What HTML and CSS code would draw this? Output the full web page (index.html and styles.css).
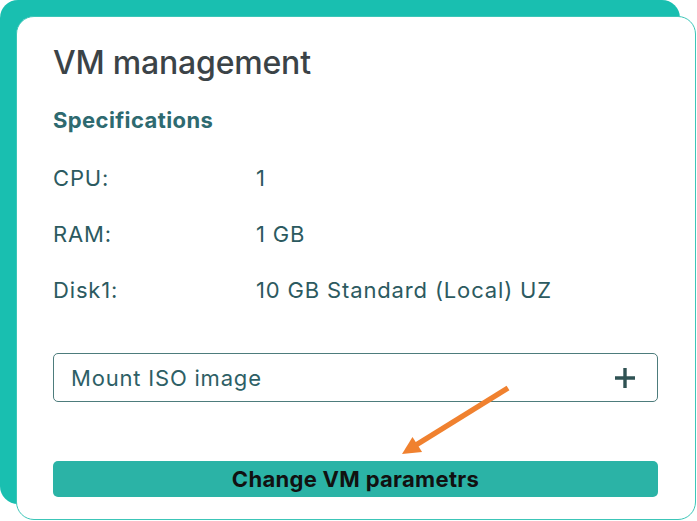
FILE: index.html
```html
<!DOCTYPE html>
<html lang="en">
<head>
<meta charset="utf-8">
<title>VM management</title>
<link rel="stylesheet" href="styles.css">
</head>
<body>
<section class="card">
  <h1 class="title">VM management</h1>
  <h2 class="subtitle">Specifications</h2>
  <dl class="specs">
    <div class="row"><dt>CPU:</dt><dd>1</dd></div>
    <div class="row"><dt>RAM:</dt><dd>1 GB</dd></div>
    <div class="row"><dt>Disk1:</dt><dd>10 GB Standard (Local) UZ</dd></div>
  </dl>
  <button class="mount" type="button">
    <span>Mount ISO image</span>
    <svg class="plus" width="24" height="24" viewBox="0 0 24 24" aria-hidden="true">
      <path d="M12 2v20M2 12h20" stroke="#2f5253" stroke-width="3.4" fill="none"/>
    </svg>
  </button>
  <button class="change" type="button">Change VM parametrs</button>
  <svg class="arrow" width="125" height="82" viewBox="0 0 125 82" aria-hidden="true">
    <line x1="113" y1="8" x2="21" y2="65" stroke="#f0812f" stroke-width="5.5" stroke-linecap="butt"/>
    <polygon points="7,74 17.5,56.9 27.1,72.1" fill="#f0812f"/>
  </svg>
</section>
</body>
</html>
```
FILE: styles.css
```css
html, body {
  margin: 0;
  padding: 0;
  background: #ffffff;
}
body {
  width: 697px;
  height: 521px;
  overflow: hidden;
  font-family: "Inter", "Liberation Sans", sans-serif;
}
.card {
  position: relative;
  box-sizing: border-box;
  margin: 16px 0 0 16px;
  width: 680px;
  height: 504px;
  background: #ffffff;
  border: 1.5px solid #3cc6b8;
  border-radius: 18px;
  box-shadow: -16px -16px 0 0 #19bfb0;
  padding: 27px 37px 0 36px;
  display: flex;
  flex-direction: column;
}
.title {
  margin: 0;
  font-size: 32px;
  line-height: 38px;
  font-weight: 500;
  color: #3b4347;
  letter-spacing: -0.2px;
}
.subtitle {
  margin: 24px 0 0;
  font-size: 22px;
  line-height: 28px;
  font-weight: 700;
  letter-spacing: 0.4px;
  color: #2e6a70;
}
.specs {
  margin: 16px 0 0;
}
.row {
  display: flex;
  height: 56px;
  align-items: center;
  font-size: 22px;
  letter-spacing: 0.85px;
  color: #2c5a60;
}
.row dt {
  width: 203px;
  flex: none;
}
.row dd {
  margin: 0;
}
.mount {
  margin-top: 35px;
  height: 49px;
  box-sizing: border-box;
  border: 1.5px solid #4d7c7c;
  border-radius: 5px;
  background: #fff;
  display: flex;
  align-items: center;
  justify-content: space-between;
  padding: 0 20px 0 17px;
  font-family: "Inter", "Liberation Sans", sans-serif;
  font-size: 22px;
  letter-spacing: 0.8px;
  color: #2e5f66;
}
.plus {
  display: block;
}
.change {
  margin-top: 59px;
  height: 36px;
  border: none;
  border-radius: 5px;
  background: #2bb3a6;
  color: #111;
  font-family: "Inter", "Liberation Sans", sans-serif;
  font-weight: 700;
  font-size: 22px;
  letter-spacing: 0.3px;
}
.arrow {
  position: absolute;
  left: 377.5px;
  top: 362.5px;
  pointer-events: none;
}
```
